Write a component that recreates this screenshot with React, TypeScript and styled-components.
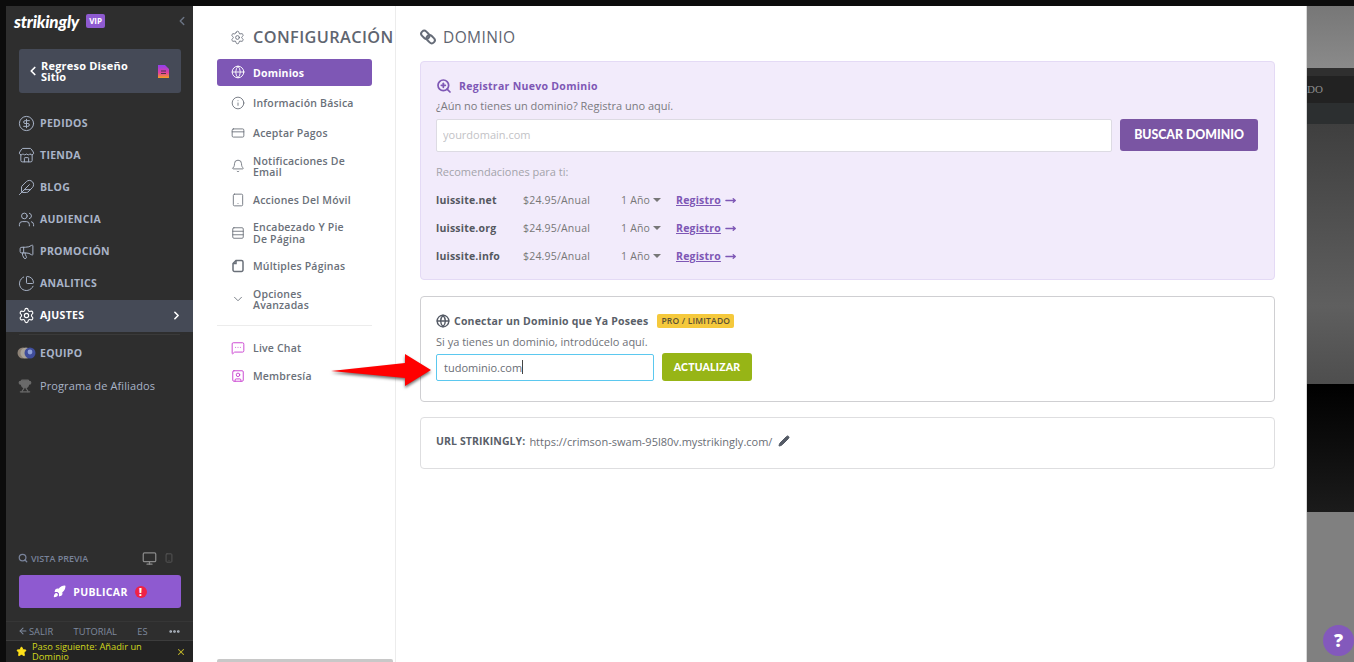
import styled, { createGlobalStyle } from "styled-components";
import {
  ArrowLeft,
  Bell,
  ChartPie,
  ChevronDown,
  ChevronLeft,
  ChevronRight,
  CircleDollarSign,
  CreditCard,
  Ellipsis,
  Feather,
  Globe,
  Info,
  Megaphone,
  MessageSquareMore,
  Monitor,
  MoveRight,
  Pencil,
  Rocket,
  Rows3,
  Search,
  Settings,
  Smartphone,
  SquareUser,
  Star,
  Store,
  Tablet,
  Trophy,
  Users,
  X,
  ZoomIn,
} from "lucide-react";

const GlobalStyle = createGlobalStyle`
  html, body {
    margin: 0;
    height: 100%;
    overflow: hidden;
    background: #0c0c0c;
    font-family: "Open Sans", "Liberation Sans", sans-serif;
  }
  * { box-sizing: border-box; }
`;

const PagesIcon = () => (
  <svg width="14" height="14" viewBox="0 0 14 14" fill="none" stroke="currentColor" strokeWidth="1.5">
    <path d="M5 1.5h5.5a1.5 1.5 0 0 1 1.5 1.5v8a1.5 1.5 0 0 1-1.5 1.5h-7A1.5 1.5 0 0 1 2 11V4.5z" />
    <path d="M5 1.5v3H2" />
  </svg>
);

const mainNav = [
  { label: "PEDIDOS", Icon: CircleDollarSign },
  { label: "TIENDA", Icon: Store },
  { label: "BLOG", Icon: Feather },
  { label: "AUDIENCIA", Icon: Users },
  { label: "PROMOCIÓN", Icon: Megaphone },
  { label: "ANALITICS", Icon: ChartPie },
];

const settingsNav = [
  { label: "Información Básica", Icon: Info },
  { label: "Aceptar Pagos", Icon: CreditCard },
  { label: "Notificaciones De Email", Icon: Bell },
  { label: "Acciones Del Móvil", Icon: Tablet },
  { label: "Encabezado Y Pie De Página", Icon: Rows3 },
  { label: "Múltiples Páginas", Icon: PagesIcon },
  { label: "Opciones Avanzadas", Icon: ChevronDown },
];

const recommendations = ["luissite.net", "luissite.org", "luissite.info"];

const App = () => {
  return (
    <Shell>
      <GlobalStyle />
      <Sidebar>
        <LogoRow>
          <Logo>strikingly</Logo>
          <VipBadge>VIP</VipBadge>
          <Collapse>
            <ChevronLeft size={14} strokeWidth={2.5} />
          </Collapse>
        </LogoRow>
        <BackCard>
          <ChevronLeft size={14} strokeWidth={3} color="#fff" />
          <BackLabel>Regreso Diseño Sitio</BackLabel>
          <PageBadge viewBox="0 0 11 13">
            <defs>
              <linearGradient id="pageGrad" x1="0" y1="0" x2="0" y2="1">
                <stop offset="0" stopColor="#8f3ff0" />
                <stop offset="0.6" stopColor="#e040a0" />
                <stop offset="1" stopColor="#f6a21c" />
              </linearGradient>
            </defs>
            <path d="M0 0h7l4 4v9H0z" fill="url(#pageGrad)" />
            <path d="M3 6h5M3 8.5h5" stroke="#2e2e2e" strokeWidth="0.8" />
          </PageBadge>
        </BackCard>
        <MainNav>
          {mainNav.map(({ label, Icon }) => (
            <NavRow key={label}>
              <Icon size={17} strokeWidth={1.4} />
              <span>{label}</span>
            </NavRow>
          ))}
          <NavRow $active>
            <Settings size={17} strokeWidth={1.6} />
            <span>AJUSTES</span>
            <ActiveChevron>
              <ChevronRight size={13} strokeWidth={3} />
            </ActiveChevron>
          </NavRow>
        </MainNav>
        <SideDivider />
        <NavRow>
          <Avatars viewBox="0 0 19 14">
            <circle cx="6" cy="7" r="5.5" fill="#8d8276" />
            <circle cx="9" cy="7" r="5.5" fill="#a8a299" />
            <circle cx="13" cy="7" r="5.5" fill="#3f4d9c" />
            <circle cx="13" cy="6" r="2.4" fill="#8fa0d8" />
          </Avatars>
          <span>EQUIPO</span>
        </NavRow>
        <AffiliateRow>
          <Trophy size={14} strokeWidth={2} color="#6a6a6a" fill="#6a6a6a" />
          <span>Programa de Afiliados</span>
        </AffiliateRow>

        <SideFooter>
          <PreviewRow>
            <Search size={10} strokeWidth={3} />
            <span>VISTA PREVIA</span>
            <PreviewIcons>
              <Monitor size={15} color="#8a8a8a" />
              <Smartphone size={10} color="#5b5b5b" />
            </PreviewIcons>
          </PreviewRow>
          <PublishButton>
            <Rocket size={13} fill="#fff" />
            <span>PUBLICAR</span>
            <Alert>!</Alert>
          </PublishButton>
          <FooterLinks>
            <FooterLink>
              <ArrowLeft size={10} strokeWidth={2.5} />
              SALIR
            </FooterLink>
            <FooterLink>TUTORIAL</FooterLink>
            <FooterLink>ES</FooterLink>
            <Ellipsis size={13} strokeWidth={3} color="#b8c0cc" />
          </FooterLinks>
          <NextStep>
            <Star size={11} fill="#ffe11a" color="#ffe11a" />
            <NextStepText>Paso siguiente: Añadir un Dominio</NextStepText>
            <X size={10} color="#c5b92a" strokeWidth={2.5} />
          </NextStep>
        </SideFooter>
      </Sidebar>

      <SettingsColumn>
        <SettingsTitle>
          <Settings size={15} strokeWidth={1.4} color="#666c78" />
          <span>CONFIGURACIÓN</span>
        </SettingsTitle>
        <SettingsList>
          <SettingsItem $active>
            <Globe size={14} strokeWidth={1.6} />
            <span>Dominios</span>
          </SettingsItem>
          {settingsNav.map(({ label, Icon }) => (
            <SettingsItem key={label}>
              <Icon size={14} strokeWidth={1.5} />
              <span>{label}</span>
            </SettingsItem>
          ))}
        </SettingsList>
        <SettingsDivider />
        <SettingsItem $tight>
          <MessageSquareMore size={14} strokeWidth={1.6} color="#c93fd0" />
          <span>Live Chat</span>
        </SettingsItem>
        <SettingsItem $tight>
          <SquareUser size={14} strokeWidth={1.6} color="#c93fd0" />
          <span>Membresía</span>
        </SettingsItem>
        <ColumnScrollbar />
      </SettingsColumn>

      <Main>
        <MainTitle>
          <svg width="16" height="16" viewBox="0 0 16 16" fill="none" stroke="#666c78" strokeWidth="2">
            <rect x="0.8" y="2.8" width="9" height="6" rx="3" transform="rotate(45 5.3 5.8)" />
            <rect x="6.2" y="7.2" width="9" height="6" rx="3" transform="rotate(45 10.7 10.2)" />
          </svg>
          <span>DOMINIO</span>
        </MainTitle>

        <RegisterCard>
          <RegisterHeading>
            <ZoomIn size={16} strokeWidth={2.6} />
            <span>Registrar Nuevo Dominio</span>
          </RegisterHeading>
          <HelpText>¿Aún no tienes un dominio? Registra uno aquí.</HelpText>
          <SearchRow>
            <DomainInput placeholder="yourdomain.com" readOnly />
            <SearchButton>BUSCAR DOMINIO</SearchButton>
          </SearchRow>
          <RecommendTitle>Recomendaciones para ti:</RecommendTitle>
          <RecommendList>
            {recommendations.map((name) => (
              <RecommendRow key={name}>
                <DomainName>{name}</DomainName>
                <span>$24.95/Anual</span>
                <Years>
                  1 Año <Caret />
                </Years>
                <RegisterLink>Registro</RegisterLink>
                <MoveRight size={11} strokeWidth={3} color="#7e57b5" />
              </RecommendRow>
            ))}
          </RecommendList>
        </RegisterCard>

        <ConnectCard>
          <ConnectHeading>
            <Globe size={14} strokeWidth={2.4} color="#555b66" />
            <span>Conectar un Dominio que Ya Posees</span>
            <ProBadge>PRO / LIMITADO</ProBadge>
          </ConnectHeading>
          <ConnectHelp>Si ya tienes un dominio, introdúcelo aquí.</ConnectHelp>
          <ConnectRow>
            <FocusedInput>
              tudominio.com<TextCaret />
            </FocusedInput>
            <UpdateButton>ACTUALIZAR</UpdateButton>
          </ConnectRow>
        </ConnectCard>

        <UrlCard>
          <UrlLabel>URL STRIKINGLY:</UrlLabel>
          <UrlValue>https://crimson-swam-95l80v.mystrikingly.com/</UrlValue>
          <Pencil size={12} strokeWidth={2} fill="#555b66" color="#555b66" />
        </UrlCard>
      </Main>

      <Backdrop>
        <BandLight />
        <BandEdge />
        <BandMenu>DO</BandMenu>
        <BandSub />
        <BandHero />
        <BandBlack />
        <BandBottom />
      </Backdrop>

      <CalloutArrow viewBox="0 0 106 40">
        <polygon points="2,19 76,11 76,2 102,18 76,34 76,26" fill="#ff0000" />
      </CalloutArrow>
      <HelpBubble>?</HelpBubble>
    </Shell>
  );
};

const Shell = styled.div`
  position: relative;
  display: flex;
  width: 1354px;
  height: 662px;
  padding: 6px 0 0 6px;
  overflow: hidden;
`;

const Sidebar = styled.aside`
  display: flex;
  flex-direction: column;
  flex: 0 0 187px;
  background: #2e2e2e;
  color: #a9b4c8;
`;

const LogoRow = styled.div`
  display: flex;
  align-items: center;
  height: 30px;
  padding: 0 4px 0 8px;
`;

const Logo = styled.span`
  font-family: "Lato", sans-serif;
  font-size: 17px;
  font-style: italic;
  font-weight: 900;
  color: #fff;
  letter-spacing: -0.2px;
`;

const VipBadge = styled.span`
  margin-left: 7px;
  padding: 0 3px;
  height: 14px;
  line-height: 14px;
  border-radius: 2px;
  background: #8e5ad0;
  color: #fff;
  font-size: 8px;
  font-weight: 700;
`;

const Collapse = styled.span`
  display: flex;
  margin-left: auto;
  color: #6b7484;
`;

const BackCard = styled.div`
  display: flex;
  align-items: center;
  gap: 1px;
  height: 44px;
  margin: 13px 12px 0 13px;
  padding: 0 12px 0 7px;
  border-radius: 3px;
  background: #454a57;
`;

const BackLabel = styled.span`
  flex: 1;
  padding-right: 26px;
  color: #fff;
  font-size: 11px;
  font-weight: 700;
  line-height: 11px;
  letter-spacing: 0.2px;
`;

const PageBadge = styled.svg`
  flex: none;
  width: 11px;
  height: 13px;
`;

const MainNav = styled.nav`
  display: flex;
  flex-direction: column;
  margin-top: 15px;
`;

const NavRow = styled.div<{ $active?: boolean }>`
  display: flex;
  align-items: center;
  gap: 5px;
  height: 32px;
  padding: 0 10px 2px 12px;
  background: ${(p) => (p.$active ? "#454a56" : "transparent")};
  color: ${(p) => (p.$active ? "#fff" : "#a9b4c8")};
  font-size: 10.5px;
  font-weight: 700;
  letter-spacing: 0.3px;

  svg {
    flex: none;
  }
`;

const ActiveChevron = styled.span`
  display: flex;
  margin-left: auto;
`;

const SideDivider = styled.div`
  height: 1px;
  margin: 2px 13px 3px;
  background: #3a3a3a;
`;

const Avatars = styled.svg`
  width: 19px;
  height: 14px;
  margin: 0 -1px 0 -1px;
`;

const AffiliateRow = styled.div`
  display: flex;
  align-items: center;
  gap: 8px;
  height: 33px;
  padding: 0 0 2px 12px;
  font-size: 11px;
  letter-spacing: 0.1px;
`;

const SideFooter = styled.div`
  margin-top: auto;
`;

const PreviewRow = styled.div`
  display: flex;
  align-items: center;
  gap: 3px;
  height: 20px;
  padding: 0 19px 0 12px;
  color: #79839a;
  font-size: 9px;
  font-weight: 600;

  svg {
    flex: none;
  }
`;

const PreviewIcons = styled.span`
  display: flex;
  align-items: center;
  gap: 7px;
  margin-left: auto;
`;

const PublishButton = styled.div`
  display: flex;
  align-items: center;
  justify-content: center;
  gap: 7px;
  height: 33px;
  margin: 7px 12px 0 13px;
  border-radius: 3px;
  background: #8e5ad0;
  color: #fff;
  font-size: 10.5px;
  font-weight: 700;
  letter-spacing: 0.3px;
`;

const Alert = styled.span`
  width: 12px;
  height: 12px;
  border-radius: 50%;
  background: #ef2246;
  color: #fff;
  font-size: 10px;
  font-weight: 800;
  line-height: 12px;
  text-align: center;
`;

const FooterLinks = styled.div`
  display: flex;
  align-items: center;
  justify-content: space-between;
  height: 19px;
  margin-top: 13px;
  padding: 0 12px;
  border-top: 1px solid #363636;
  color: #7f8a9e;
  font-size: 9.3px;
`;

const FooterLink = styled.span`
  display: flex;
  align-items: center;
  gap: 1px;
`;

const NextStep = styled.div`
  display: flex;
  align-items: center;
  gap: 5px;
  height: 22px;
  padding: 0 7px 0 10px;
  border-top: 1px solid #3c3c3c;
  background: #232323;

  svg {
    flex: none;
  }
`;

const NextStepText = styled.span`
  flex: 1;
  color: #d2d81c;
  font-size: 9.3px;
  line-height: 10px;
`;

const SettingsColumn = styled.section`
  display: flex;
  flex-direction: column;
  flex: 0 0 203px;
  padding-left: 24px;
  border-right: 1px solid #ececec;
  background: #fff;
  overflow: hidden;
`;

const SettingsTitle = styled.h2`
  display: flex;
  align-items: center;
  gap: 8px;
  height: 51.35px;
  margin: 0;
  padding: 11px 0 0 13px;
  color: #5f6570;
  font-size: 16.3px;
  font-weight: 600;
  letter-spacing: 0.4px;
  white-space: nowrap;

  svg {
    flex: none;
  }
`;

const SettingsList = styled.div`
  display: flex;
  flex-direction: column;
  width: 155px;
`;

const SettingsItem = styled.div<{ $active?: boolean; $tight?: boolean }>`
  display: flex;
  align-items: center;
  gap: 8px;
  width: 155px;
  min-height: 27px;
  margin: ${(p) => (p.$tight ? "0.5px 0" : "1.65px 0")};
  padding: 6px 0 4px 14px;
  border-radius: 3px;
  background: ${(p) => (p.$active ? "#7e57b5" : "transparent")};
  color: ${(p) => (p.$active ? "#fff" : "#6a7079")};
  font-size: 10.5px;
  font-weight: ${(p) => (p.$active ? 700 : 600)};
  line-height: 11.5px;
  letter-spacing: 0.2px;

  svg {
    flex: none;
    margin-top: -2px;
  }

  span {
    max-width: 104px;
  }
`;

const SettingsDivider = styled.div`
  width: 155px;
  height: 1px;
  margin: 7px 0 8px;
  background: #ececec;
`;

const ColumnScrollbar = styled.div`
  width: 176px;
  height: 3px;
  margin-top: auto;
  border-radius: 2px 2px 0 0;
  background: #c8c8c8;
`;

const Main = styled.main`
  flex: 1;
  padding: 0 31px 0 24px;
  background: #fff;
`;

const MainTitle = styled.h1`
  display: flex;
  align-items: center;
  gap: 7px;
  height: 55px;
  margin: 0;
  padding-top: 6px;
  color: #5f6570;
  font-size: 15.5px;
  font-weight: 500;
  letter-spacing: 0.4px;
`;

const RegisterCard = styled.div`
  height: 219px;
  padding: 14px 16px 0 15px;
  border: 1px solid #e4daf5;
  border-radius: 4px;
  background: #f2ebfb;
`;

const RegisterHeading = styled.div`
  display: flex;
  align-items: center;
  gap: 7px;
  height: 20px;
  color: #7e57b5;
  font-size: 10.5px;
  font-weight: 700;
  letter-spacing: 0.3px;
`;

const HelpText = styled.p`
  margin: 2px 0 0;
  color: #7a7a80;
  font-size: 11px;
  line-height: 16px;
`;

const SearchRow = styled.div`
  display: flex;
  gap: 8px;
  margin-top: 5px;
`;

const DomainInput = styled.input`
  flex: 1;
  height: 33px;
  padding: 0 6px 2px;
  border: 1px solid #dddbe3;
  border-radius: 2px;
  background: #fff;
  font-family: inherit;
  font-size: 11px;
  outline: none;

  &::placeholder {
    color: #c2c2c6;
  }
`;

const SearchButton = styled.button`
  width: 138px;
  height: 32px;
  padding: 0 0 2px;
  border: 0;
  border-radius: 3px;
  background: #7a55a3;
  color: #fff;
  font-family: "Lato", sans-serif;
  font-size: 12.3px;
  font-weight: 900;
`;

const RecommendTitle = styled.div`
  margin-top: 13px;
  color: #a3a3aa;
  font-size: 11px;
  line-height: 14px;
`;

const RecommendList = styled.div`
  margin-top: 7px;
`;

const RecommendRow = styled.div`
  display: grid;
  grid-template-columns: 87px 98px 55px auto auto;
  justify-content: start;
  align-items: center;
  height: 28px;
  color: #777;
  font-size: 10.5px;
  letter-spacing: 0.2px;

  svg {
    margin-left: 4px;
  }
`;

const DomainName = styled.span`
  color: #55585f;
  font-weight: 700;
`;

const Years = styled.span`
  display: flex;
  align-items: center;
  gap: 3px;
`;

const Caret = styled.i`
  width: 0;
  height: 0;
  border: 4px solid transparent;
  border-top-color: #777;
  border-bottom: 0;
`;

const RegisterLink = styled.span`
  color: #7e57b5;
  font-weight: 700;
  text-decoration: underline;
`;

const ConnectCard = styled.div`
  height: 106px;
  margin-top: 16px;
  padding: 17px 15px 0;
  border: 1px solid #cfcfd2;
  border-radius: 4px;
`;

const ConnectHeading = styled.div`
  display: flex;
  align-items: center;
  gap: 4px;
  height: 14px;
  color: #5a5f69;
  font-size: 10.5px;
  font-weight: 700;
  letter-spacing: 0.2px;

  svg {
    flex: none;
  }
`;

const ProBadge = styled.span`
  margin-left: 5px;
  padding: 0 4px;
  height: 14px;
  border-radius: 2px;
  background: #f5c93c;
  color: #5a5034;
  font-size: 8.5px;
  font-weight: 600;
  line-height: 14px;
  letter-spacing: 0.2px;
`;

const ConnectHelp = styled.p`
  margin: 7px 0 0;
  color: #6f7278;
  font-size: 11px;
  line-height: 14px;
`;

const ConnectRow = styled.div`
  display: flex;
  align-items: center;
  gap: 8px;
  margin-top: 4px;
`;

const FocusedInput = styled.div`
  display: flex;
  align-items: center;
  width: 218px;
  height: 27px;
  padding: 0 7px;
  border: 1px solid #5bc8ef;
  border-radius: 2px;
  color: #6a6e75;
  font-size: 11px;
`;

const TextCaret = styled.i`
  width: 1px;
  height: 14px;
  background: #444;
`;

const UpdateButton = styled.button`
  width: 90px;
  height: 28px;
  padding: 0;
  border: 0;
  border-radius: 3px;
  background: #97b516;
  color: #fff;
  font-family: "Lato", sans-serif;
  font-size: 10.5px;
  font-weight: 900;
  letter-spacing: 0.2px;
`;

const UrlCard = styled.div`
  display: flex;
  align-items: flex-start;
  gap: 4px;
  height: 52px;
  margin-top: 15px;
  padding: 16px 15px 0;
  border: 1px solid #dedee0;
  border-radius: 4px;
  font-size: 11px;
  line-height: 15px;

  svg {
    margin: 1px 0 0 2px;
  }
`;

const UrlLabel = styled.span`
  color: #5a5f69;
  font-size: 10.5px;
  font-weight: 700;
  letter-spacing: 0.1px;
`;

const UrlValue = styled.span`
  color: #6a6e75;
`;

const Backdrop = styled.div`
  display: flex;
  flex-direction: column;
  flex: 0 0 48px;
  border-left: 1px solid #d8d8d8;
`;

const BandLight = styled.div`
  height: 62px;
  background: linear-gradient(#777, #8a8a8a);
`;

const BandEdge = styled.div`
  height: 8px;
  background: #2f2f2f;
`;

const BandMenu = styled.div`
  height: 27px;
  background: #222;
  color: #8d8d8d;
  font-family: "Liberation Serif", serif;
  font-size: 11px;
  line-height: 27px;
`;

const BandSub = styled.div`
  height: 21px;
  background: #2c2f30;
`;

const BandHero = styled.div`
  height: 260px;
  background: linear-gradient(#3f3f3f, #5f5f5f 70%, #4e4e4e);
`;

const BandBlack = styled.div`
  height: 128px;
  background: linear-gradient(#000, #1b1b1b);
`;

const BandBottom = styled.div`
  flex: 1;
  background: #808080;
`;

const CalloutArrow = styled.svg`
  position: absolute;
  left: 329px;
  top: 352px;
  width: 106px;
  height: 40px;
  filter: drop-shadow(0 2px 1.5px rgba(0, 0, 0, 0.55));
`;

const HelpBubble = styled.div`
  position: absolute;
  left: 1323px;
  top: 625px;
  width: 31px;
  height: 31px;
  border-radius: 50%;
  background: #8359bc;
  color: #fff;
  font-size: 18px;
  font-weight: 800;
  line-height: 31px;
  text-align: center;
`;

export default App;
